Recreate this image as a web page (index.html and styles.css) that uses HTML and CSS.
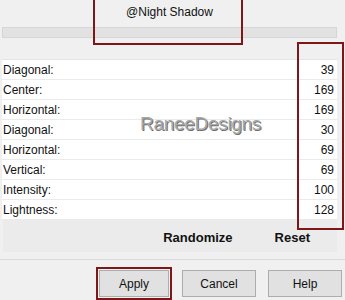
FILE: index.html
```html
<!DOCTYPE html>
<html lang="en">
<head>
	<meta charset="UTF-8">
	<title>Night Shadow</title>
	<link rel="stylesheet" href="styles.css">
</head>
<body>
	<div class="dialog">
		<div class="preset">@Night Shadow</div>
		<div class="track"></div>
		<ul class="params">
			<li><span>Diagonal:</span><span>39</span></li>
			<li><span>Center:</span><span>169</span></li>
			<li><span>Horizontal:</span><span>169</span></li>
			<li><span>Diagonal:</span><span>30</span></li>
			<li><span>Horizontal:</span><span>69</span></li>
			<li><span>Vertical:</span><span>69</span></li>
			<li><span>Intensity:</span><span>100</span></li>
			<li><span>Lightness:</span><span>128</span></li>
		</ul>
		<div class="actions">
			<span>Randomize</span>
			<span>Reset</span>
		</div>
		<div class="footer">
			<button class="btn apply">Apply</button>
			<button class="btn">Cancel</button>
			<button class="btn">Help</button>
		</div>

		<div class="mark mark-preset"></div>
		<div class="mark mark-values"></div>
		<div class="watermark">RaneeDesigns</div>
	</div>
</body>
</html>
```

FILE: styles.css
```css
body{
	margin: 0;
	background-color: #f0f0f0;
	font-family: "Liberation Sans", Arial, sans-serif;
	font-size: 12px;
	color: #111;
}
.dialog{
	position: relative;
	width: 345px;
	height: 300px;
	overflow: hidden;
}
.preset{
	height: 26px;
	line-height: 24px;
	text-align: center;
	padding-right: 6px;
}
.track{
	height: 9px;
	margin: 1px 8px 0 2px;
	background-color: #e2e2e2;
	border: 1px solid #d6d6d6;
}
ul,li{
	margin: 0;
	padding: 0;
	list-style: none;
}
.params{
	margin: 21px 8px 0 2px;
	background-color: #fff;
	border-top: 1px solid #e4e4e4;
}
.params li{
	display: flex;
	justify-content: space-between;
	height: 19px;
	line-height: 20px;
	padding: 0 3px 0 1px;
	border-bottom: 1px solid #ebebeb;
}
.actions{
	display: flex;
	justify-content: flex-end;
	gap: 42px;
	height: 32px;
	line-height: 36px;
	margin: 0 8px 0 3px;
	padding-right: 27px;
	background-color: #ebebeb;
	font-size: 13px;
	font-weight: bold;
}
.footer{
	display: flex;
	justify-content: flex-end;
	gap: 12px;
	margin-top: 7px;
	padding: 10px 3px 0 0;
	border-top: 1px solid #dadada;
}
.btn{
	width: 74px;
	height: 27px;
	padding: 0;
	font-family: "Liberation Sans", Arial, sans-serif;
	font-size: 12px;
	color: #111;
	background-color: #e1e1e1;
	border: 1px solid #adadad;
}
.apply{
	width: 70px;
	margin-right: 1px;
	outline: 2px solid #7e1818;
	outline-offset: 1px;
}
.mark{
	position: absolute;
	border: 2px solid #7e1818;
}
.mark-preset{
	left: 93px;
	top: -4px;
	width: 146px;
	height: 45px;
}
.mark-values{
	left: 297px;
	top: 42px;
	width: 43px;
	height: 184px;
}
.watermark{
	position: absolute;
	left: 140px;
	top: 113px;
	font-size: 19px;
	letter-spacing: -0.3px;
	color: #a9a9a9;
	text-shadow: 1px 1px 0 #707070;
}
```
